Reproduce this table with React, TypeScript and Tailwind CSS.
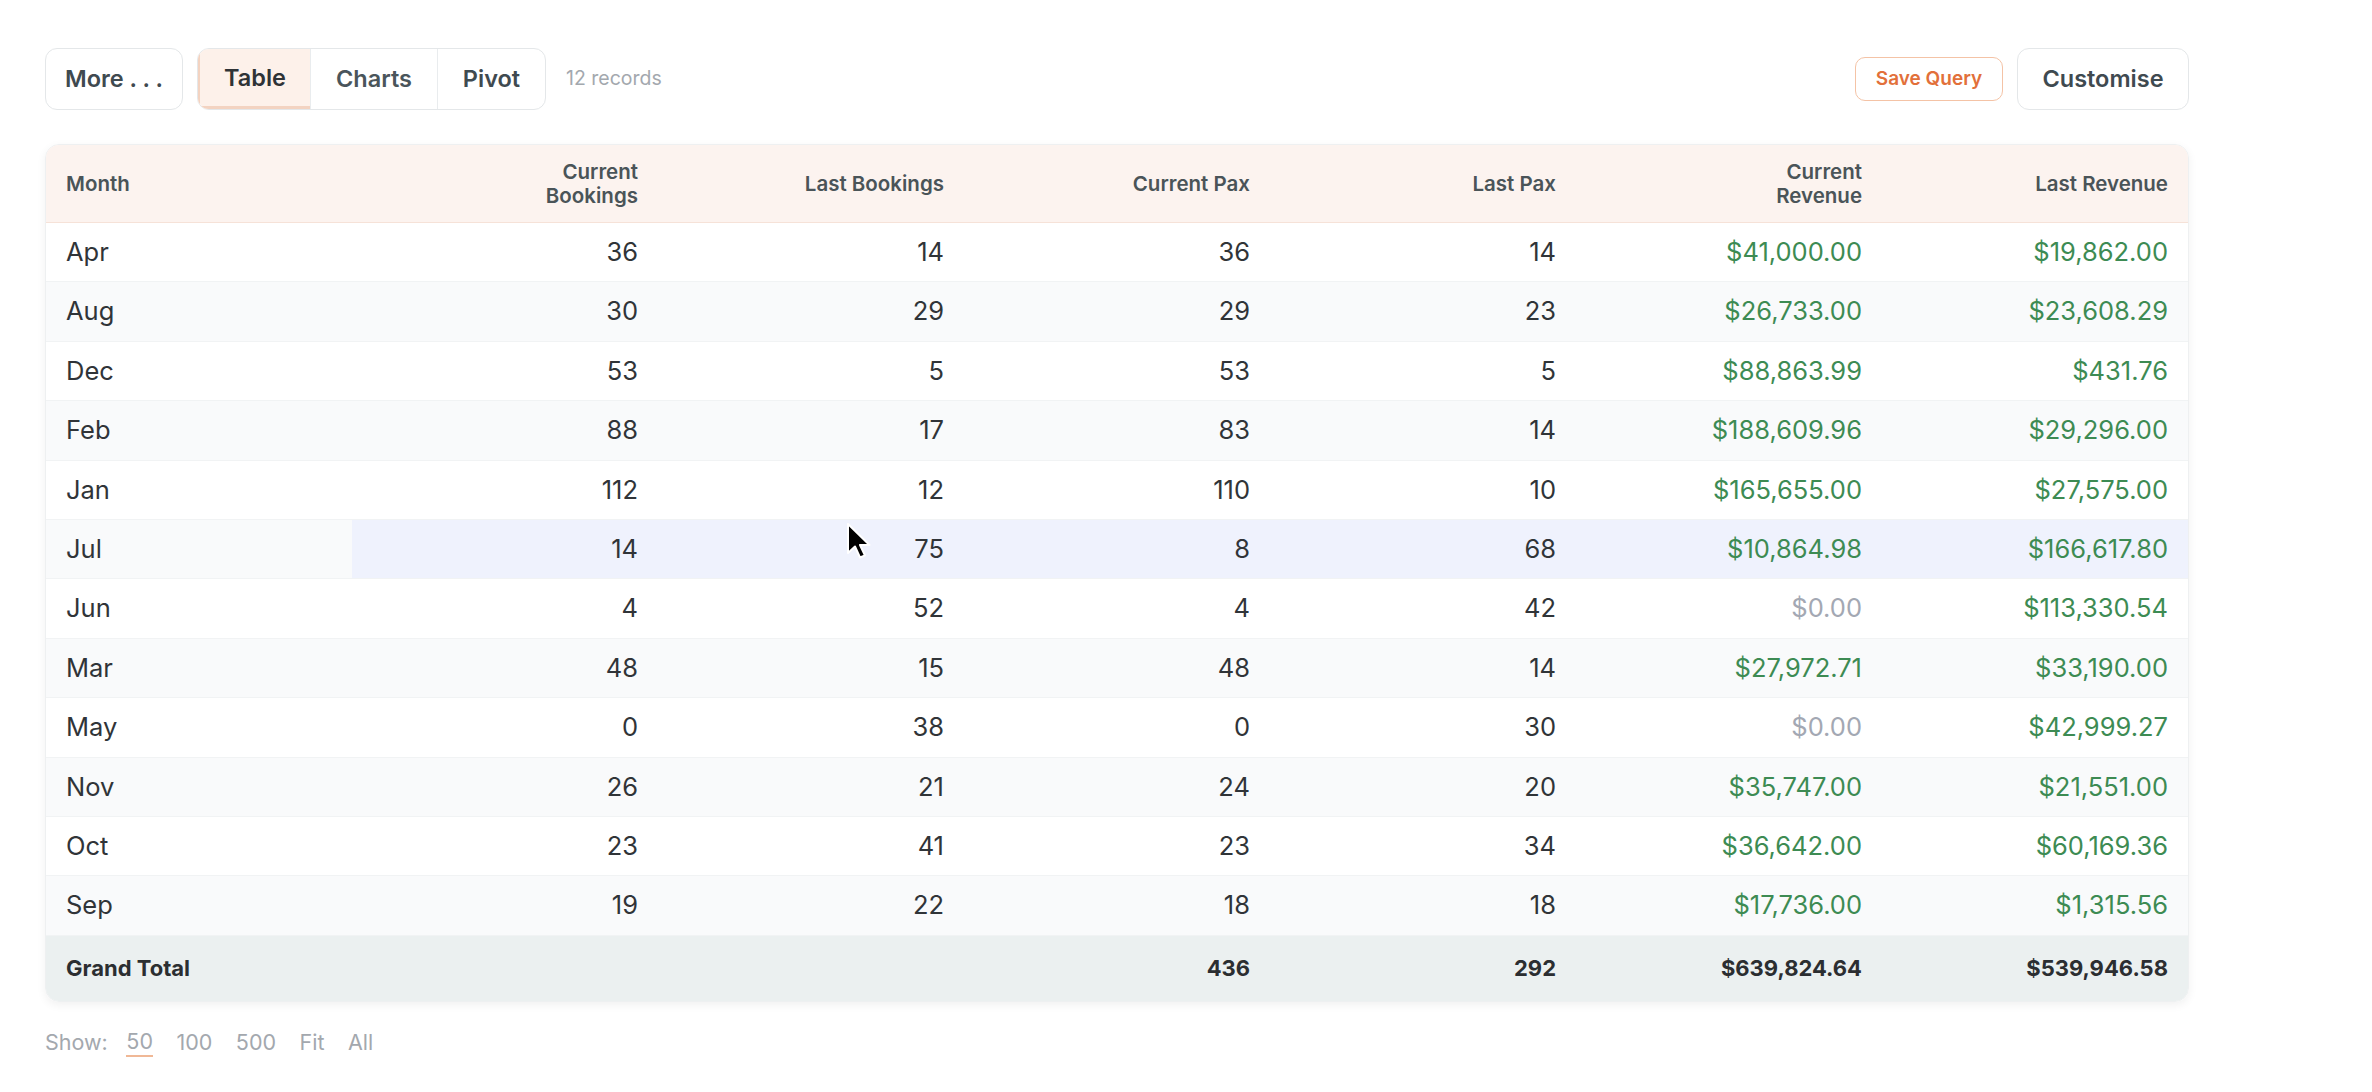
import React from "react";

type Row = {
  month: string;
  curBookings: number;
  lastBookings: number;
  curPax: number;
  lastPax: number;
  curRevenue: string;
  lastRevenue: string;
};

const rows: Row[] = [
  { month: "Apr", curBookings: 36, lastBookings: 14, curPax: 36, lastPax: 14, curRevenue: "$41,000.00", lastRevenue: "$19,862.00" },
  { month: "Aug", curBookings: 30, lastBookings: 29, curPax: 29, lastPax: 23, curRevenue: "$26,733.00", lastRevenue: "$23,608.29" },
  { month: "Dec", curBookings: 53, lastBookings: 5, curPax: 53, lastPax: 5, curRevenue: "$88,863.99", lastRevenue: "$431.76" },
  { month: "Feb", curBookings: 88, lastBookings: 17, curPax: 83, lastPax: 14, curRevenue: "$188,609.96", lastRevenue: "$29,296.00" },
  { month: "Jan", curBookings: 112, lastBookings: 12, curPax: 110, lastPax: 10, curRevenue: "$165,655.00", lastRevenue: "$27,575.00" },
  { month: "Jul", curBookings: 14, lastBookings: 75, curPax: 8, lastPax: 68, curRevenue: "$10,864.98", lastRevenue: "$166,617.80" },
  { month: "Jun", curBookings: 4, lastBookings: 52, curPax: 4, lastPax: 42, curRevenue: "$0.00", lastRevenue: "$113,330.54" },
  { month: "Mar", curBookings: 48, lastBookings: 15, curPax: 48, lastPax: 14, curRevenue: "$27,972.71", lastRevenue: "$33,190.00" },
  { month: "May", curBookings: 0, lastBookings: 38, curPax: 0, lastPax: 30, curRevenue: "$0.00", lastRevenue: "$42,999.27" },
  { month: "Nov", curBookings: 26, lastBookings: 21, curPax: 24, lastPax: 20, curRevenue: "$35,747.00", lastRevenue: "$21,551.00" },
  { month: "Oct", curBookings: 23, lastBookings: 41, curPax: 23, lastPax: 34, curRevenue: "$36,642.00", lastRevenue: "$60,169.36" },
  { month: "Sep", curBookings: 19, lastBookings: 22, curPax: 18, lastPax: 18, curRevenue: "$17,736.00", lastRevenue: "$1,315.56" },
];

function Money({ value }: { value: string }) {
  const zero = value === "$0.00";
  return (
    <div className={`px-[20px] text-right ${zero ? "text-[#a3a8b3]" : "text-[#3d8b53]"}`}>{value}</div>
  );
}

export default function App() {
  const hovered = "Jul";

  return (
    <div
      className="relative min-h-[1092px] bg-white px-[45px] pt-[48px] text-[#303438]"
      style={{ fontFamily: "Inter, 'Liberation Sans', sans-serif" }}
    >
      <div className="w-[2144px]">
        {/* Toolbar */}
        <div className="flex h-[62px] items-center">
          <button className="h-[62px] w-[138px] rounded-[12px] border border-[#e4e7e9] bg-white text-[23.5px] font-semibold text-[#3f4a50]">
            More . . .
          </button>

          <div className="ml-[14px] flex h-[62px] overflow-hidden rounded-[12px] border border-[#e4e7e9]">
            <button className="w-[112px] border-b-[3px] border-l-2 border-[#f3d3c1] bg-[#fdf1ea] text-[23.5px] font-semibold text-[#2f3336]">
              Table
            </button>
            <button className="w-[127px] border-l border-[#e9ecee] text-[23.5px] font-semibold text-[#4a555b]">
              Charts
            </button>
            <button className="w-[108px] border-l border-[#e9ecee] text-[23.5px] font-semibold text-[#3f4a50]">
              Pivot
            </button>
          </div>

          <span className="ml-[20px] text-[19.5px] text-[#a3a8ae]">12 records</span>

          <div className="ml-auto flex items-center gap-[14px]">
            <button className="h-[44px] w-[148px] rounded-[10px] border-[1.5px] border-[#f4c3a6] bg-white text-[19px] font-semibold text-[#e2703a]">
              Save Query
            </button>
            <button className="h-[62px] w-[172px] rounded-[12px] border border-[#e4e7e9] bg-white text-[23.5px] font-semibold text-[#3f4a50]">
              Customise
            </button>
          </div>
        </div>

        {/* Table */}
        <div className="mt-[34px] overflow-hidden rounded-[14px] border border-[#eef0f1] shadow-[0_3px_10px_rgba(0,0,0,0.06)]">
          <div className="grid h-[78px] grid-cols-7 items-center border-b border-[#f6e2d8] bg-[#fcf3ef] text-[20.5px] font-semibold leading-[24px] text-[#4a5458]">
            <div className="px-[20px]">Month</div>
            <div className="px-[20px] text-right">Current<br />Bookings</div>
            <div className="px-[20px] text-right">Last Bookings</div>
            <div className="px-[20px] text-right">Current Pax</div>
            <div className="px-[20px] text-right">Last Pax</div>
            <div className="px-[20px] text-right">Current<br />Revenue</div>
            <div className="px-[20px] text-right">Last Revenue</div>
          </div>

          {rows.map((r, i) => {
            const stripe = i % 2 === 1 ? "bg-[#f9fafb]" : "bg-white";
            const rowBg = r.month === hovered ? "bg-[#eff2fd]" : stripe;
            return (
              <div
                key={r.month}
                className={`grid h-[59.4px] grid-cols-7 items-center border-b border-[#f1f3f4] text-[25.5px] ${rowBg}`}
              >
                <div className={`flex h-full items-center px-[20px] ${stripe}`}>{r.month}</div>
                <div className="px-[20px] text-right">{r.curBookings}</div>
                <div className="px-[20px] text-right">{r.lastBookings}</div>
                <div className="px-[20px] text-right">{r.curPax}</div>
                <div className="px-[20px] text-right">{r.lastPax}</div>
                <Money value={r.curRevenue} />
                <Money value={r.lastRevenue} />
              </div>
            );
          })}

          <div className="grid h-[65px] grid-cols-7 items-center bg-[#ebf0f0] text-[22px] font-bold text-[#2b2e31]">
            <div className="px-[20px]">Grand Total</div>
            <div />
            <div />
            <div className="px-[20px] text-right">436</div>
            <div className="px-[20px] text-right">292</div>
            <div className="px-[20px] text-right">$639,824.64</div>
            <div className="px-[20px] text-right">$539,946.58</div>
          </div>
        </div>

        {/* Page size */}
        <div className="mt-[24px] flex items-center gap-[23.5px] text-[21.5px] text-[#a3a8ae]">
          <span className="-mr-[5px]">Show:</span>
          <span className="border-b-2 border-[#f0b896] leading-[28px]">50</span>
          <span>100</span>
          <span>500</span>
          <span>Fit</span>
          <span>All</span>
        </div>
      </div>

      {/* Mouse pointer */}
      <svg className="absolute left-[846px] top-[522px]" width="26" height="38" viewBox="0 0 26 38">
        <path
          d="M2 2 L2 31 L9 24.5 L14 35.5 L19 33.5 L14 23 L23.5 23 Z"
          fill="#000"
          stroke="#fff"
          strokeWidth="2"
          strokeLinejoin="round"
        />
      </svg>
    </div>
  );
}
